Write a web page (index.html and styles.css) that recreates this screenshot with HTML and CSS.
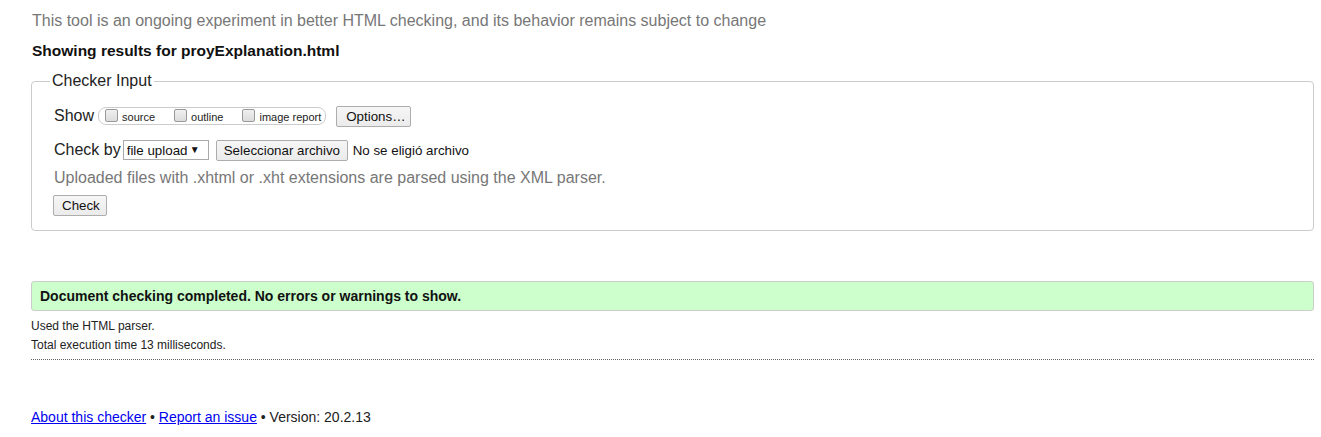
FILE: index.html
```html
<!DOCTYPE html>
<html lang="en">
<head>
<meta charset="utf-8">
<title>Nu Html Checker</title>
<link rel="stylesheet" href="styles.css">
</head>
<body>
<p class="intro">This tool is an ongoing experiment in better HTML checking, and its behavior remains subject to change</p>
<h2 class="results-title">Showing results for proyExplanation.html</h2>
<form class="checker-form">
  <fieldset class="checker-input">
    <legend class="checker-legend">Checker Input</legend>
    <div class="row show-row">
      <span class="row-label">Show</span>
      <span class="toggle-group">
        <label class="toggle"><input type="checkbox" class="cb"><span>source</span></label>
        <label class="toggle"><input type="checkbox" class="cb"><span>outline</span></label>
        <label class="toggle"><input type="checkbox" class="cb"><span>image report</span></label>
      </span>
      <button type="button" class="btn options-btn">Options…</button>
    </div>
    <div class="row checkby-row">
      <span class="row-label">Check by</span>
      <span class="select-wrap">
        <select class="select"><option>file upload</option></select>
      </span>
      <button type="button" class="btn file-btn">Seleccionar archivo</button>
      <span class="file-name">No se eligió archivo</span>
    </div>
    <p class="hint">Uploaded files with .xhtml or .xht extensions are parsed using the XML parser.</p>
    <button type="button" class="btn check-btn">Check</button>
  </fieldset>
</form>
<div class="success">Document checking completed. No errors or warnings to show.</div>
<div class="details">
  <p class="detail-line">Used the HTML parser.</p>
  <p class="detail-line">Total execution time 13 milliseconds.</p>
</div>
<p class="footer"><a href="#">About this checker</a> • <a href="#">Report an issue</a> • Version: 20.2.13</p>
</body>
</html>
```

FILE: styles.css
```css
html, body {
  background: #fff;
}
body {
  margin: 0;
  padding: 0 7px 0 31px;
  font-family: "Liberation Sans", Arial, sans-serif;
  color: #222;
  font-size: 16px;
}
.intro {
  margin: 0;
  padding-top: 12px;
  font-size: 16px;
  line-height: 18px;
  color: #777;
  padding-left: 1px;
}
.results-title {
  margin: 12px 0 0 1px;
  font-size: 15.5px;
  line-height: 18px;
  font-weight: bold;
  color: #111;
}
.checker-form {
  margin: 12px 0 0 0;
}
.checker-input {
  margin: 0;
  border: 1px solid #ccc;
  border-radius: 4px;
  padding: 0 21px 14px 21px;
  min-width: 0;
}
.checker-legend {
  padding: 0 2px;
  margin-left: -3px;
  font-size: 16px;
  line-height: 18px;
  color: #222;
}
.row {
  display: flex;
  align-items: center;
  height: 22px;
}
.show-row {
  margin-top: 15px;
}
.checkby-row {
  margin-top: 12px;
}
.row-label {
  font-size: 16px;
  line-height: 18px;
  margin-left: 1px;
}
.toggle-group {
  display: flex;
  align-items: center;
  height: 16px;
  margin-left: 4px;
  border: 1px solid #ccc;
  border-radius: 8px;
  padding: 0 4px 0 5px;
  gap: 18px;
}
.toggle {
  display: flex;
  align-items: center;
  font-size: 11px;
  line-height: 13px;
  color: #222;
  white-space: nowrap;
}
.toggle span {
  margin-top: 3px;
}
.cb {
  appearance: none;
  -webkit-appearance: none;
  width: 13px;
  height: 13px;
  margin: -2px 4px 0 1px;
  border: 1px solid #999;
  border-radius: 2px;
  background: linear-gradient(#f0f0f0, #dcdcdc);
  box-sizing: border-box;
}
.btn {
  font-family: "Liberation Sans", Arial, sans-serif;
  font-size: 13.33px;
  line-height: 15px;
  color: #111;
  height: 21px;
  box-sizing: border-box;
  border: 1px solid #adadad;
  border-radius: 2px;
  background: linear-gradient(#f6f6f6, #ebebeb);
  padding: 0 9px;
  margin: 0;
  white-space: nowrap;
}
.options-btn {
  margin-left: 10px;
  width: 75px;
}
.select-wrap {
  position: relative;
  display: inline-block;
  margin-left: 2px;
  height: 20px;
}
.select-wrap::after {
  content: "▼";
  position: absolute;
  right: 9px;
  top: 4px;
  font-size: 10px;
  line-height: 11px;
  color: #111;
  pointer-events: none;
}
.select {
  appearance: none;
  -webkit-appearance: none;
  width: 86px;
  height: 20px;
  box-sizing: border-box;
  border: 1px solid #a9a9a9;
  border-radius: 0;
  background: #fff;
  font-family: "Liberation Sans", Arial, sans-serif;
  font-size: 13.33px;
  color: #111;
  padding: 0 0 0 3px;
  margin: 0;
}
.file-btn {
  margin-left: 7px;
  padding: 0 7px;
  width: 132px;
}
.file-name {
  font-size: 13.33px;
  margin-left: 5px;
  color: #111;
}
.hint {
  margin: 8px 0 0 1px;
  font-size: 16px;
  line-height: 18px;
  color: #777;
}
.check-btn {
  display: block;
  margin-top: 8px;
  width: 54px;
  padding: 0 8px;
}
.success {
  margin-top: 50px;
  border: 1px solid #ccc;
  border-radius: 3px;
  background: #ccffcc;
  padding: 0 8px;
  height: 28px;
  line-height: 28px;
  font-size: 14px;
  font-weight: bold;
  color: #111;
}
.details {
  border-bottom: 1px dotted #666;
  padding: 6px 0 4px 0;
}
.detail-line {
  margin: 0;
  font-size: 12px;
  line-height: 19px;
  color: #222;
}
.footer {
  margin: 48px 0 0 0;
  font-size: 14px;
  line-height: 18px;
  color: #222;
}
.footer a {
  color: #0000ee;
  text-decoration: underline;
}
```
